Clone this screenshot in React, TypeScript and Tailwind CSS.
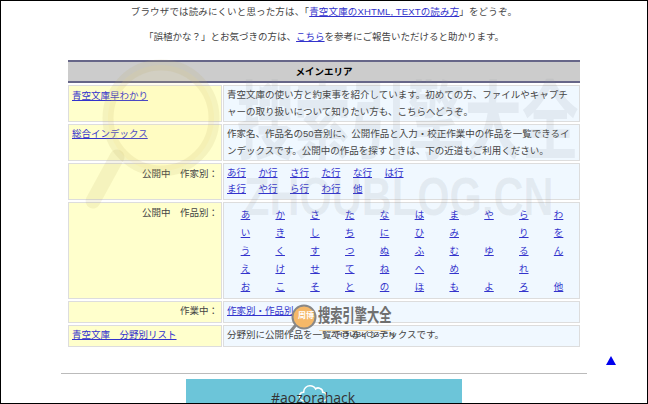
const font = "font-['Liberation_Sans','Noto_Sans_CJK_JP',sans-serif]";

const authorRows = [
  ['あ行', 'か行', 'さ行', 'た行', 'な行', 'は行'],
  ['ま行', 'や行', 'ら行', 'わ行', '他'],
];

const kanaRows = [
  ['あ', 'か', 'さ', 'た', 'な', 'は', 'ま', 'や', 'ら', 'わ'],
  ['い', 'き', 'し', 'ち', 'に', 'ひ', 'み', '', 'り', 'を'],
  ['う', 'く', 'す', 'つ', 'ぬ', 'ふ', 'む', 'ゆ', 'る', 'ん'],
  ['え', 'け', 'せ', 'て', 'ね', 'へ', 'め', '', 'れ', ''],
  ['お', 'こ', 'そ', 'と', 'の', 'ほ', 'も', 'よ', 'ろ', '他'],
];

const Link = ({ children }: { children: React.ReactNode }) => (
  <a className="text-[#3333cc] underline">{children}</a>
);

const Row = ({ left, right, h, alignRight }: { left: React.ReactNode; right: React.ReactNode; h: string; alignRight?: boolean }) => (
  <div className={`flex gap-[1px] ${h}`}>
    <div className={`w-[154px] shrink-0 border border-[#dddddd] bg-[#ffffcc] ${alignRight ? 'px-[3px] text-right' : 'px-[3px]'}`}>{left}</div>
    <div className="flex-1 whitespace-nowrap border border-[#dddddd] bg-[#f0f8ff] px-[3px]">{right}</div>
  </div>
);

const Watermark = () => (
  <div className="pointer-events-none absolute inset-0">
    <svg viewBox="0 0 150 160" className="absolute left-[80px] top-[58px] h-[160px] w-[150px]" fill="none">
      <circle cx="80" cy="59" r="53" fill="#ffe97a" fillOpacity="0.12" stroke="#b8a860" strokeOpacity="0.14" strokeWidth="11" />
      <path d="M36 98L12 142" stroke="#b8a860" strokeOpacity="0.14" strokeWidth="15" strokeLinecap="round" />
    </svg>
    <div className="absolute left-[236px] top-[77px] origin-left scale-x-[0.67] whitespace-nowrap text-[85px] font-bold leading-[90px] text-[#808890]/12">搜索引擎大全</div>
    <div className="absolute left-[243px] top-[169px] origin-left scale-x-[0.77] whitespace-nowrap text-[54px] font-bold leading-[52px] text-[#808890]/12">ZHOUBLOG.CN</div>

    <svg viewBox="0 0 34 34" className="absolute left-[285px] top-[302px] h-[34px] w-[34px]" fill="none">
      <circle cx="18" cy="14" r="11.5" fill="#f5b868" stroke="#888888" strokeWidth="2" />
      <path d="M9 23L4 29" stroke="#888888" strokeWidth="3" strokeLinecap="round" />
    </svg>
    <div className="absolute left-[297px] top-[310px] whitespace-nowrap text-[8px] font-bold leading-[10px] text-white">周博</div>
    <div className="absolute left-[317px] top-[303px] origin-left scale-x-[0.68] whitespace-nowrap text-[18px] font-bold leading-[24px] text-[#6f6f6f]">搜索引擎大全</div>
    <div className="absolute left-[318px] top-[329px] w-[72px] border-t border-[#f0d8a8]" />
    <div className="absolute left-[330px] top-[329px] whitespace-nowrap text-[8px] leading-[10px] tracking-[0.5px] text-[#333333]">ZHOUBLOG.CN</div>
  </div>
);

export default function App() {
  return (
    <div className={`${font} relative h-[404px] w-[648px] overflow-hidden border border-black bg-white text-[9.5px] leading-[18px] text-[#444444]`}>
      <div className="pt-[2px] text-center">
        <p className="tracking-[0.15px]">ブラウザでは読みにくいと思った方は、「<Link>青空文庫のXHTML, TEXTの読み方</Link>」をどうぞ。</p>
        <p className="mt-[7px]">「誤植かな？」とお気づきの方は、<Link>こちら</Link>を参考にご報告いただけると助かります。</p>
      </div>

      <div className="mx-[67px] mt-[14px] flex flex-col gap-[2px]">
        <div className="h-[23px] border-y-2 border-[#666688] bg-[#cccccc] text-center font-bold leading-[19px] text-black">メインエリア</div>
        <Row
          h="h-[37px]"
          left={<div className="pt-[1px]"><Link>青空文庫早わかり</Link></div>}
          right={<div className="leading-[17px]">青空文庫の使い方と約束事を紹介しています。初めての方、ファイルやキャプチ<br />ャーの取り扱いについて知りたい方も、こちらへどうぞ。</div>}
        />
        <Row
          h="h-[37px]"
          left={<Link>総合インデックス</Link>}
          right={<div className="leading-[17px]">作家名、作品名の50音別に、公開作品と入力・校正作業中の作品を一覧できるイ<br />ンデックスです。公開中の作品を探すときは、下の近道もご利用ください。</div>}
        />
        <Row
          h="h-[37px]"
          alignRight
          left={<div className="pt-[1px]">公開中　作家別：</div>}
          right={
            <div className="flex flex-col pt-[1px] leading-[16px]">
              {authorRows.map((row, i) => (
                <div key={i} className="flex gap-[12px]">
                  {row.map((a) => <span key={a} className="w-[19.5px]"><Link>{a}</Link></span>)}
                </div>
              ))}
            </div>
          }
        />
        <Row
          h="h-[97px]"
          alignRight
          left={<div className="pt-[1px]">公開中　作品別：</div>}
          right={
            <div className="grid grid-cols-10 pl-[1px] pt-[3px] leading-[18px]">
              {kanaRows.flat().map((k, i) => (
                <span key={i} className="text-center"><Link>{k}</Link></span>
              ))}
            </div>
          }
        />
        <Row h="h-[22px]" alignRight left="作業中：" right={<Link>作家別・作品別</Link>} />
        <Row h="h-[22px]" left={<Link>青空文庫　分野別リスト</Link>} right="分野別に公開作品を一覧できるインデックスです。" />
      </div>

      <div className="relative">
        <div className="absolute right-[31px] top-[9px] h-0 w-0 border-x-[5px] border-b-[9px] border-x-transparent border-b-[#0000ee]" />
      </div>

      <div className="mx-[60px] mt-[26px] border-t border-[#bbbbbb]" />

      <div className="relative mx-auto mt-[5px] h-[40px] w-[276px] bg-[#6cc5d9]">
        <svg viewBox="0 0 40 24" className="absolute left-[112px] top-[4px] h-[20px] w-[32px]" fill="none" stroke="white" strokeWidth="2">
          <path d="M8 22c-4 0-6-3-6-6s2-5 5-5c0-5 4-8 8-8 3 0 6 2 7 4 1-1 3-2 5-1 3 1 4 3 4 5 3 0 5 3 5 6s-2 5-5 5" />
        </svg>
        <div className="absolute left-[85px] top-[9px] font-['Open_Sans',sans-serif] text-[14px] leading-[20px] text-[#333333]">#aozorahack</div>
      </div>

      <Watermark />
    </div>
  );
}
